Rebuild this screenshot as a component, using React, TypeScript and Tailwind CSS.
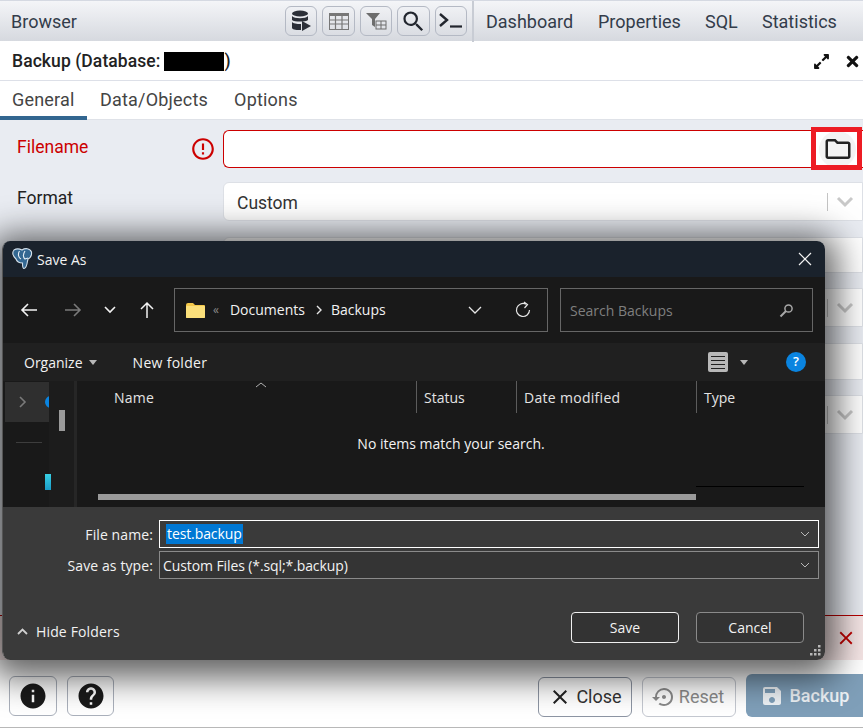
import React from "react";
import { FaExpandAlt, FaTimes } from "react-icons/fa";
import { MdOutlineFolder, MdInfo, MdHelp, MdClose, MdSettingsBackupRestore, MdSave, MdErrorOutline, MdSearch } from "react-icons/md";

const roboto = "font-['Roboto',sans-serif]";

function ToolBtn({ children, w = "w-[32px]" }: { children: React.ReactNode; w?: string }) {
  return (
    <div className={`${w} h-[30px] rounded-[6px] border border-[#b4b9c4] flex items-center justify-center`}>{children}</div>
  );
}

function SelectRow({ h = "h-[39px]", label, value, chevron = true, mt }: { h?: string; label?: string; value?: string; chevron?: boolean; mt: string }) {
  return (
    <div className={`flex ${mt}`}>
      <div className="w-[223px] pl-[17px] pt-[3px] text-[17.5px] text-[#222222]">{label}</div>
      <div className={`flex-1 ${h} bg-white rounded-l-[6px] border border-[#dde0e6] flex items-center pl-[13px] text-[17.5px] text-[#333333]`}>
        <span className="flex-1 pt-[3px]">{value}</span>
        {chevron && (
          <>
            <div className="w-px h-[18px] bg-[#c4c4c4]" />
            <svg width="18" height="12" viewBox="0 0 18 12" className="mx-[8px]"><path d="M2 2 L9 9 L16 2" fill="none" stroke="#c9c9c9" strokeWidth="3" /></svg>
          </>
        )}
      </div>
    </div>
  );
}

function Elephant() {
  return (
    <svg width="22" height="22" viewBox="0 0 22 22">
      <path d="M3 2 C6 0 9 1 11 2 C14 0 19 0 20.5 4 C21 8 19 10 17 11 L16.5 13 C16 17 15 20 13 20.5 C11.5 20.5 11.5 18 11.5 15 C9 15 6 14 5 11 C3 9 0.5 5 3 2 Z" fill="#336791" stroke="#d4e0ea" strokeWidth="1.1" />
      <path d="M8.5 3 C6.5 6 7.5 10 10 11 M14 3 C12 6 12 9 14 11 M14 11 L17 10" fill="none" stroke="#e6eef5" strokeWidth="1.1" />
    </svg>
  );
}

function HeaderCell({ children, w, sep = true }: { children: React.ReactNode; w: string; sep?: boolean }) {
  return (
    <div className={`${w} h-[32px] pt-[1px] flex items-center pl-[7px] ${sep ? "border-r border-[#5c5c5c]" : ""}`}>{children}</div>
  );
}

function SaveAsDialog() {
  return (
    <div className="absolute left-[2px] top-[241px] w-[823px] h-[419px] rounded-[8px] overflow-hidden flex flex-col border-l border-[#555] shadow-[0_6px_34px_12px_rgba(0,0,0,0.62)] font-['Open_Sans',sans-serif] text-[14px] text-[#f2f2f2]">
      {/* title bar */}
      <div className="h-[36px] bg-[#1a222c] flex items-center pl-[8px] pr-[13px] gap-[3px]">
        <Elephant />
        <span className="text-[14px] ml-[1px]">Save As</span>
        <div className="flex-1" />
        <svg width="14" height="14" viewBox="0 0 14 14"><path d="M1 1 L13 13 M13 1 L1 13" stroke="#f2f2f2" strokeWidth="1.2" /></svg>
      </div>
      {/* nav bar */}
      <div className="h-[66px] bg-[#191919] flex items-center pl-[17px]">
        <svg width="18" height="16" viewBox="0 0 18 16"><path d="M17 8 H2 M8 2 L2 8 L8 14" fill="none" stroke="#f2f2f2" strokeWidth="1.6" /></svg>
        <svg width="18" height="16" viewBox="0 0 18 16" className="ml-[26px]"><path d="M1 8 H16 M10 2 L16 8 L10 14" fill="none" stroke="#7a7a7a" strokeWidth="1.6" /></svg>
        <svg width="12" height="8" viewBox="0 0 12 8" className="ml-[22px]"><path d="M1 1 L6 6 L11 1" fill="none" stroke="#f2f2f2" strokeWidth="1.6" /></svg>
        <svg width="16" height="18" viewBox="0 0 16 18" className="ml-[23px]"><path d="M8 17 V2 M2 8 L8 2 L14 8" fill="none" stroke="#f2f2f2" strokeWidth="1.5" /></svg>
        <div className="ml-[19px] w-[374px] h-[44px] border border-[#666666] flex items-center pl-[11px] pr-[15px]">
          <svg width="19" height="15" viewBox="0 0 19 15"><path d="M0 2 Q0 0 2 0 H7 L9 2 H18 Q19 2 19 3 V14 Q19 15 18 15 H1 Q0 15 0 14 Z" fill="#f4c84a" /><rect x="0" y="3" width="19" height="12" rx="1" fill="#fbdf7a" /></svg>
          <span className="ml-[8px] text-[#8a8a8a] text-[12px]">«</span>
          <span className="ml-[11px] -mt-[1px]">Documents</span>
          <svg width="7" height="10" viewBox="0 0 7 10" className="ml-[11px]"><path d="M1 1 L5 5 L1 9" fill="none" stroke="#e6e6e6" strokeWidth="1.4" /></svg>
          <span className="ml-[8px] -mt-[1px]">Backups</span>
          <div className="flex-1" />
          <svg width="14" height="8" viewBox="0 0 14 8"><path d="M1 1 L7 7 L13 1" fill="none" stroke="#e6e6e6" strokeWidth="1.3" /></svg>
          <svg width="18" height="18" viewBox="0 0 18 18" className="ml-[32px]"><path d="M15.5 9 A6.5 6.5 0 1 1 12 3.2 M10 1 L13.5 3.5 L10.5 7" fill="none" stroke="#e6e6e6" strokeWidth="1.2" /></svg>
        </div>
        <div className="ml-[12px] w-[253px] h-[44px] border border-[#666666] flex items-center justify-between pl-[9px] pr-[18px] text-[#7f7f7f]">
          <span>Search Backups</span>
          <svg width="15" height="15" viewBox="0 0 15 15"><circle cx="9.5" cy="5.5" r="3.6" fill="none" stroke="#a8a8a8" strokeWidth="1.5" /><path d="M7 8 L1.5 13.5" stroke="#a8a8a8" strokeWidth="2" /></svg>
        </div>
      </div>
      {/* command bar */}
      <div className="h-[38px] bg-[#202020] flex items-center pl-[21px]">
        <span>Organize</span>
        <svg width="8" height="5" viewBox="0 0 8 5" className="ml-[6px]"><path d="M0 0 H8 L4 5 Z" fill="#b8b8b8" /></svg>
        <span className="ml-[36px] tracking-[0.3px]">New folder</span>
        <div className="flex-1" />
        <div className="w-[20px] h-[20px] rounded-[2px] bg-[#b8b8b8] flex flex-col items-center justify-center gap-[3px]">
          <div className="w-[14px] h-px bg-[#222]" /><div className="w-[14px] h-px bg-[#222]" /><div className="w-[14px] h-px bg-[#222]" /><div className="w-[14px] h-px bg-[#222]" />
        </div>
        <svg width="8" height="5" viewBox="0 0 8 5" className="ml-[12px]"><path d="M0 0 H8 L4 5 Z" fill="#b8b8b8" /></svg>
        <div className="ml-[38px] mr-[19px] w-[20px] h-[20px] rounded-full bg-[#0a84e0] flex items-center justify-center text-[13px] text-white font-semibold">?</div>
      </div>
      {/* file list */}
      <div className="h-[126px] bg-[#191919] flex">
        <div className="w-[46px] pl-[2px] relative bg-[#191919]">
          <div className="h-[40px] mt-[1px] bg-[#2f2f2f] flex items-center pl-[14px] relative overflow-hidden">
            <svg width="8" height="12" viewBox="0 0 8 12"><path d="M1 1 L6 6 L1 11" fill="none" stroke="#7a7a7a" strokeWidth="1.6" /></svg>
            <div className="absolute left-[40px] top-[14px] w-[12px] h-[12px] rounded-full bg-[#0a84e0]" />
          </div>
          <div className="w-[26px] h-px bg-[#3d3d3d] ml-[11px] mt-[20px]" />
          <div className="absolute z-10 left-[42px] top-[93px] w-[6px] h-[16px] bg-gradient-to-b from-[#38d0e4] to-[#1a9cc8]" />
        </div>
        <div className="w-[28px] relative bg-[#1c1c1c] border-r-[3px] border-[#262626]">
          <div className="absolute left-[10px] top-[29px] w-[6px] h-[21px] bg-[#9a9a9a]" />
        </div>
        <div className="flex-1 relative">
          <div className="flex text-[#e4e4e4]">
            <HeaderCell w="w-[340px] pl-[37px] tracking-[0.2px]">Name</HeaderCell>
            <HeaderCell w="w-[100px]">Status</HeaderCell>
            <HeaderCell w="w-[180px] tracking-[0.3px]">Date modified</HeaderCell>
            <HeaderCell w="w-[100px]" sep={false}>Type</HeaderCell>
          </div>
          <svg width="12" height="6" viewBox="0 0 12 6" className="absolute left-[178px] top-[1px]"><path d="M1 5 L6 1 L11 5" fill="none" stroke="#b0b0b0" strokeWidth="1" /></svg>
          <div className="text-center w-[748px] mt-[20px] text-[#f2f2f2]">No items match your search.</div>
          <div className="absolute left-[21px] top-[113px] w-[598px] h-[6px] bg-[#9a9a9a]" />
          <div className="absolute left-[619px] top-[105px] w-[108px] h-px bg-black" />
        </div>
      </div>
      {/* bottom */}
      <div className="flex-1 bg-[#3a3a3a] relative pt-[13px]">
        <div className="flex items-center h-[28px]">
          <div className="w-[156px] text-right pr-[6px] tracking-[0.1px]">File name:</div>
          <div className="w-[660px] h-[28px] border border-white flex items-center pl-[6px] pr-[8px]">
            <span className="bg-[#0078d4] text-white h-[20px] px-[1px] leading-[19px] flex-none tracking-[-0.1px]">test.backup</span>
            <div className="flex-1" />
            <svg width="10" height="6" viewBox="0 0 10 6"><path d="M1 1 L5 5 L9 1" fill="none" stroke="#b8b8b8" strokeWidth="1" /></svg>
          </div>
        </div>
        <div className="flex items-center h-[28px] mt-[3px]">
          <div className="w-[156px] text-right pr-[6px] tracking-[0.1px]">Save as type:</div>
          <div className="w-[660px] h-[28px] border border-[#8a8a8a] bg-[#343434] flex items-center pl-[3px] pr-[8px]">
            <span className="flex-1 tracking-[-0.1px]">Custom Files (*.sql;*.backup)</span>
            <svg width="10" height="6" viewBox="0 0 10 6"><path d="M1 1 L5 5 L9 1" fill="none" stroke="#b8b8b8" strokeWidth="1" /></svg>
          </div>
        </div>
        <div className="flex items-center mt-[33px] pl-[14px] pr-[21px]">
          <svg width="11" height="7" viewBox="0 0 11 7" className="mt-[7px]"><path d="M1 6 L5.5 1.5 L10 6" fill="none" stroke="#d0d0d0" strokeWidth="1.8" /></svg>
          <span className="ml-[8px] mt-[7px] tracking-[0.15px]">Hide Folders</span>
          <div className="flex-1" />
          <div className="w-[108px] h-[31px] rounded-[4px] border border-[#f0f0f0] bg-[#333333] flex items-center justify-center">Save</div>
          <div className="w-[108px] h-[31px] ml-[17px] rounded-[4px] border border-[#8a8a8a] bg-[#333333] flex items-center justify-center">Cancel</div>
        </div>
        <svg width="12" height="12" viewBox="0 0 12 12" className="absolute right-[3px] bottom-[3px]" fill="#b8b8b8">
          <rect x="8" y="0" width="2.5" height="2.5" /><rect x="4" y="4" width="2.5" height="2.5" /><rect x="8" y="4" width="2.5" height="2.5" /><rect x="0" y="8" width="2.5" height="2.5" /><rect x="4" y="8" width="2.5" height="2.5" /><rect x="8" y="8" width="2.5" height="2.5" />
        </svg>
      </div>
    </div>
  );
}

export default function App() {
  return (
    <div className={`relative w-[863px] h-[728px] overflow-hidden bg-white flex flex-col ${roboto}`}>
      {/* top bar */}
      <div className="h-[41px] flex-none flex items-center border-t border-[#d5d9e2] bg-gradient-to-b from-[#f4f5f8] to-[#d6d9df] text-[18px] text-[#333c4a]">
        <span className="ml-[11px] w-[274px]">Browser</span>
        <div className="flex gap-[5px]">
          <ToolBtn>
            <svg width="20" height="22" viewBox="0 0 20 22" fill="#2b2f38"><ellipse cx="9" cy="3.5" rx="8" ry="3" /><path d="M1 6 C3 9 15 9 17 6 V10 C15 12 3 12 1 10 Z" /><path d="M1 12 C3 14 8 14 10 14 V20 C6 20 2 20 1 18 Z" /><path d="M11 11 L20 16 L11 21 Z" /></svg>
          </ToolBtn>
          <ToolBtn w="w-[33px]">
            <svg width="20" height="17" viewBox="0 0 20 17"><rect x="0.5" y="0.5" width="19" height="16" fill="none" stroke="#777" /><rect x="0" y="0" width="20" height="3" fill="#777" /><path d="M0 7 H20 M0 11 H20 M6.5 3 V17 M13 3 V17" stroke="#777" strokeWidth="1.2" /></svg>
          </ToolBtn>
          <ToolBtn>
            <svg width="21" height="17" viewBox="0 0 21 17"><path d="M0 0 H14 L9 6 V14 L6 12 V6 Z" fill="#6d6d6d" /><rect x="10" y="8" width="10" height="8" fill="none" stroke="#6d6d6d" /><path d="M10 12 H20 M15 8 V16" stroke="#6d6d6d" /></svg>
          </ToolBtn>
          <ToolBtn w="w-[33px]"><MdSearch size={27} color="#22262e" /></ToolBtn>
          <ToolBtn>
            <svg width="24" height="16" viewBox="0 0 24 16"><path d="M1 1 L8 7 L1 13" fill="none" stroke="#22262e" strokeWidth="2.4" /><path d="M11 13.5 H23" stroke="#22262e" strokeWidth="2.2" /></svg>
          </ToolBtn>
        </div>
        <div className="w-[2px] h-[41px] bg-[#c8ccd4] ml-[5px]" />
        <span className="ml-[12px] w-[112px]">Dashboard</span>
        <span className="w-[107px]">Properties</span>
        <span className="w-[57px]">SQL</span>
        <span>Statistics</span>
      </div>
      {/* dialog title */}
      <div className="h-[40px] flex-none flex items-center border-b border-[#dde0e8] pt-[1px] pl-[12px] pr-[2px] text-[#222222]">
        <span className="text-[17.5px] tracking-[0.08px] font-medium">Backup (Database:</span>
        <span className="w-[60px] h-[19px] bg-black ml-[4px]" />
        <span className="text-[17.5px] font-medium">)</span>
        <div className="flex-1" />
        <FaExpandAlt size={17} color="#111" />
        <FaTimes size={17} color="#111" className="ml-[14px]" />
      </div>
      {/* tabs */}
      <div className="h-[39px] flex-none flex items-stretch border-b border-[#dfe2e8] text-[18px] tracking-[0.2px] text-[#444444]">
        <div className="w-[87px] pl-[12px] pt-[5px] border-b-[4px] border-[#326690] -mb-px">General</div>
        <span className="ml-[13px] pt-[5px]">Data/Objects</span>
        <span className="ml-[26px] pt-[5px]">Options</span>
      </div>
      {/* form */}
      <div className="flex-1 bg-[#e9ecf2] pt-[10px] relative">
        <div className="flex">
          <div className="w-[175px] pl-[17px] pt-[4px] text-[17.5px] text-[#cc0000]">Filename</div>
          <div className="w-[48px] pt-[6px] pl-[15px]"><MdErrorOutline size={26} color="#cc0000" /></div>
          <div className="flex-1 h-[38px] bg-white rounded-l-[6px] border border-[#cc0000] border-r-0 flex items-center justify-end pr-[7px]">
            <div className="w-[37px] h-[37px] rounded-full bg-[#f3f3f3] flex items-center justify-center">
              <MdOutlineFolder size={30} color="#222222" />
            </div>
          </div>
        </div>
        <SelectRow mt="mt-[14px]" label="Format" value="Custom" />
        <SelectRow mt="mt-[16px]" h="h-[36px]" chevron={false} />
        <SelectRow mt="mt-[15px]" />
        <SelectRow mt="mt-[16px]" h="h-[37px]" chevron={false} />
        <SelectRow mt="mt-[15px]" />
        <div className="absolute left-0 right-0 top-[495px] h-[45px] bg-[#f6e6e6] border-t border-[#b80000] flex items-center justify-end pr-[6px]">
          <MdClose size={22} color="#c40000" />
        </div>
      </div>
      {/* footer */}
      <div className="h-[68px] flex-none bg-white border-b border-[#b8b8b8] flex items-center pt-[4px] pl-[9px] pr-0 text-[18px]">
        <div className="w-[48px] h-[40px] rounded-[6px] border border-[#aab0bb] flex items-center justify-center"><MdInfo size={30} color="#1a1a1a" /></div>
        <div className="w-[47px] h-[40px] ml-[10px] rounded-[6px] border border-[#aab0bb] flex items-center justify-center"><MdHelp size={30} color="#1a1a1a" /></div>
        <div className="flex-1" />
        <div className="w-[94px] h-[40px] mt-[2px] rounded-[6px] border border-[#8d95a3] flex items-center justify-center gap-[4px] text-[#333]"><MdClose size={24} color="#222" />Close</div>
        <div className="w-[94px] h-[40px] mt-[2px] ml-[10px] rounded-[6px] border border-[#c4c8d0] flex items-center justify-center gap-[3px] pr-[2px] text-[#8a8a8a]"><MdSettingsBackupRestore size={24} color="#8a8a8a" />Reset</div>
        <div className="w-[117px] h-[43px] ml-[10px] rounded-l-[6px] bg-[#7f9fb9] flex items-center justify-center gap-[6px] text-[#eef2f6] font-medium"><MdSave size={24} color="#eef2f6" />Backup</div>
      </div>
      {/* annotation */}
      <div className="absolute left-[811px] top-[127px] w-[51px] h-[43px] border-[5px] border-[#ed1c24]" />
      <SaveAsDialog />
    </div>
  );
}
